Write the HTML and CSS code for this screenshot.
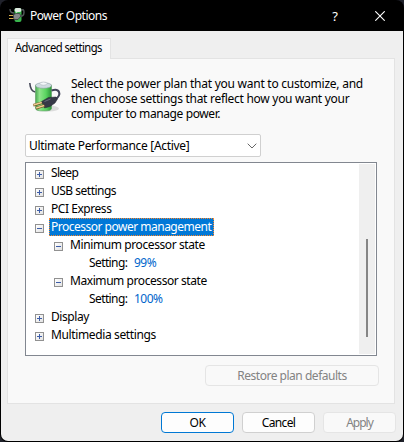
FILE: index.html
```html
<!DOCTYPE html>
<html lang="en">
<head>
<meta charset="utf-8">
<title>Power Options</title>
<link rel="stylesheet" href="styles.css">
</head>
<body>
<div class="window">
  <header class="titlebar">
    <svg class="app-icon" width="16" height="16" viewBox="0 0 16 16">
      <rect x="5.500" y="1" width="7" height="14" rx="2" fill="#39b54d"/>
      <rect x="5.500" y="1" width="7" height="4" rx="2" fill="#dfeae1"/>
      <path d="M7.500 5v3" stroke="#a4eaa8" stroke-width="1.500"/>
      <path d="M1 2q0 4 4 4M10 9q5 1 5-3.500t-2.500-2" fill="none" stroke="#54585c" stroke-width="1.400"/>
      <path d="M4 8l3-1.500h3.500L12 9l-3 3.500H5z" fill="#85888a" stroke="#393c3f" stroke-width=".8"/>
      <path d="M0 8.500h4M0 11.500h4.500" stroke="#d8ae4a"/>
    </svg>
    <h1 class="title">Power Options</h1>
    <span class="help">?</span>
    <svg class="close" width="10" height="10" viewBox="0 0 10 10"><path d="M.3.3l9.4 9.4M9.7.3L.3 9.7" stroke="#fff" stroke-width="1.1"/></svg>
  </header>
  <main class="body">
    <div class="tab"><span class="t-tab">Advanced settings</span></div>
    <section class="panel">
      <div class="intro">
        <svg class="battery" width="34" height="34" viewBox="0 0 34 34">
          <defs>
            <linearGradient id="cell" x1="0" x2="1" y1="0" y2="0">
              <stop offset="0" stop-color="#48a850"/><stop offset=".25" stop-color="#8fe38b"/><stop offset=".65" stop-color="#5ad460"/><stop offset="1" stop-color="#2c9439"/>
            </linearGradient>
          </defs>
          <ellipse cx="20" cy="29.500" rx="10" ry="3" fill="#dcdcdc"/>
          <path d="M.8 4q.5 8 5.500 9" fill="none" stroke="#454858" stroke-width="1.600"/>
          <path d="M6.500 6v23.500q0 2.500 8 2.500t8-2.500V6z" fill="url(#cell)" stroke="#5a9a61" stroke-width=".6"/>
          <ellipse cx="14.500" cy="6.500" rx="8" ry="2.800" fill="#cfdbe0" stroke="#8c9da2" stroke-width=".6"/>
          <ellipse cx="14.500" cy="4.600" rx="3.500" ry="1.600" fill="#f4f7fa" stroke="#a4adb5" stroke-width=".5"/>
          <path d="M22.500 11.500q6-2 7.500 1.500t-3.500 7.500" fill="none" stroke="#42455a" stroke-width="2"/>
          <path d="M12.500 22.500l7-4 7.500-.5 1.500 2-2.500 4-5 3.500-5.500 1.500z" fill="#363947" stroke="#22242e" stroke-width=".5"/>
          <path d="M15.500 22.500l6-2.500" stroke="#747888" stroke-width=".8"/>
          <path d="M4.300 26.300l8.700-2.600M7 29.300l8.500-2.700" stroke="#704d20" stroke-width="2.600"/>
          <path d="M4.500 26l8.300-2.500M7.200 29l8-2.500" stroke="#ecce92" stroke-width="1.500"/>
        </svg>
        <p class="text"><span class="d1">Select the power plan that you want to customize, and</span><span class="d2">then choose settings that reflect how you want your</span><span class="d3">computer to manage power.</span></p>
      </div>
      <div class="select"><span class="t-select">Ultimate Performance [Active]</span>
        <svg width="10" height="6" viewBox="0 0 10 6"><path d="M.7.7L5 5 9.300.7" fill="none" stroke="#666"/></svg>
      </div>
      <div class="tree">
        <ul class="rows">
          <li><i class="box plus"></i><span class="label r1">Sleep</span></li>
          <li><i class="box plus"></i><span class="label r2">USB settings</span></li>
          <li><i class="box plus"></i><span class="label r3">PCI Express</span></li>
          <li><i class="box"></i><span class="label selected r4">Processor power management</span></li>
          <li class="sub"><i class="box"></i><span class="label r5">Minimum processor state</span></li>
          <li class="leaf"><span class="key">Setting:</span><span class="value">99%</span></li>
          <li class="sub"><i class="box"></i><span class="label r6">Maximum processor state</span></li>
          <li class="leaf"><span class="key">Setting:</span><span class="value">100%</span></li>
          <li><i class="box plus"></i><span class="label r7">Display</span></li>
          <li><i class="box plus"></i><span class="label r8">Multimedia settings</span></li>
        </ul>
        <div class="scrollbar"><div class="thumb"></div></div>
      </div>
      <button class="btn restore" disabled>Restore plan defaults</button>
    </section>
    <footer class="actions">
      <button class="btn ok">OK</button>
      <button class="btn cancel">Cancel</button>
      <button class="btn apply" disabled>Apply</button>
    </footer>
  </main>
</div>
</body>
</html>
```
FILE: styles.css
```css
* { box-sizing: border-box; }
body { margin: 0; background: #20222b; font: 12px/18px "Noto Sans", sans-serif; color: #000; overflow: hidden; }
.window { width: 404px; height: 442px; background: #000; border-radius: 8px; padding: 0 1px 1px; display: flex; flex-direction: column; }
.titlebar { height: 31px; flex: none; display: flex; align-items: center; padding: 0 18px 0 8px; color: #fff; }
.app-icon { margin-bottom: 1px; }
.title { margin: 0 auto 0 5px; padding-top: 1px; font-size: 12px; font-weight: 400; letter-spacing: -.47px; white-space: nowrap; }
.help { font-size: 13px; margin-right: 37px; }
.close { display: block; }
.body { flex: 1; background: #efefef; border-radius: 0 0 7px 7px; padding: 7px 7px 7px 6px; display: flex; flex-direction: column; }
.tab { width: 104px; height: 21px; margin-bottom: -1px; background: #f9f9f9; border: 1px solid #e3e3e3; border-bottom: 0; padding-left: 7px; line-height: 18px; position: relative; white-space: nowrap; flex: none; }
.t-tab { display: inline-block; letter-spacing: -.6px; transform: scaleX(.935); transform-origin: left; }
.panel { width: 388px; height: 346px; flex: none; background: #f9f9f9; border: 1px solid #e3e3e3; padding: 17px 16px 0 17px; display: flex; flex-direction: column; }
.intro { display: flex; height: 58px; flex: none; }
.battery { margin: 3px 8px 0 4px; flex: none; }
.text { margin: 0; line-height: 15px; white-space: nowrap; }
.text span { display: block; }
.d1 { letter-spacing: -.25px; }
.d2 { letter-spacing: -.28px; }
.d3 { letter-spacing: -.4px; }
.select { width: 236px; height: 23px; flex: none; background: #fff; border: 1px solid #d0d0d0; border-radius: 2px; padding: 0 3px 0 3px; display: flex; align-items: center; justify-content: space-between; white-space: nowrap; }
.t-select { letter-spacing: -.31px; }
.tree { width: 352px; height: 194px; flex: none; margin-top: 5px; background: #fff; border: 1px solid #828790; display: flex; justify-content: space-between; padding: 1px; }
.rows { list-style: none; margin: 0; padding: 0 0 0 8px; }
.rows li { display: flex; height: 18px; align-items: center; white-space: nowrap; }
.rows .sub { padding-left: 19px; }
.rows .leaf { padding-left: 54px; }
.box { width: 9px; height: 9px; margin: 3px 5px 0 0; flex: none; border: 1px solid #919191; background: linear-gradient(#3d5da8, #3d5da8) center / 5px 1px no-repeat, linear-gradient(135deg, #fff, #e2e2e2); }
.plus { background: linear-gradient(#3d5da8, #3d5da8) center / 5px 1px no-repeat, linear-gradient(#3d5da8, #3d5da8) center / 1px 5px no-repeat, linear-gradient(135deg, #fff, #e2e2e2); }
.label { height: 18px; padding: 0 1px; border: 1px solid transparent; line-height: 16px; }
.selected { width: 165px; background: #0078d7; border: 1px dotted #ff8728; color: #fff; }
.r1 { letter-spacing: -.7px; }
.r2 { letter-spacing: -.5px; }
.r3 { letter-spacing: -.45px; }
.r4 { letter-spacing: -.5px; }
.r5 { letter-spacing: -.4px; }
.r6 { letter-spacing: -.43px; }
.r7 { letter-spacing: -.43px; }
.r8 { letter-spacing: -.37px; }
.key { width: 45px; letter-spacing: -.6px; }
.value { color: #0066cc; letter-spacing: -.5px; }
.scrollbar { width: 16px; background: #efefef; padding: 75px 7px 0; }
.thumb { width: 2px; height: 98px; background: #858585; }
.btn { font: 12px/16px "Noto Sans", sans-serif; color: #000; background: #fdfdfd; border: 1px solid #d0d0d0; border-radius: 4px; height: 21px; padding: 0; white-space: nowrap; }
.btn:disabled { color: #838383; background: #f9f9f9; border-color: #e5e5e5; }
.restore { width: 174px; flex: none; margin: 9px -1px 0 auto; letter-spacing: -.48px; }
.actions { display: flex; justify-content: flex-end; gap: 8px; margin-top: 8px; }
.actions .btn { width: 73px; }
.actions .ok { border-color: #0078d4; letter-spacing: -.3px; }
.actions .cancel { letter-spacing: -.65px; }
.actions .apply { letter-spacing: -1px; }
```
